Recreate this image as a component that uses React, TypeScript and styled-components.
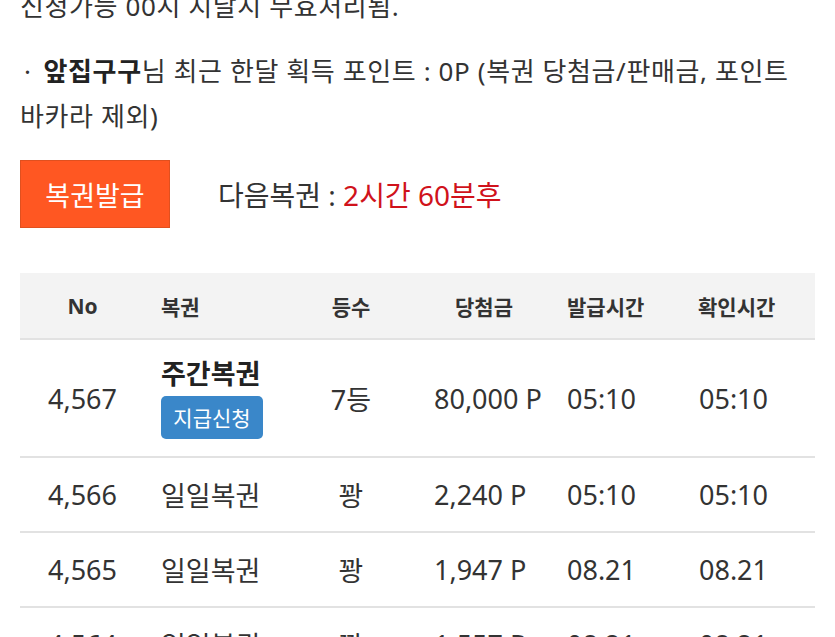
import React from "react";
import styled, { createGlobalStyle } from "styled-components";

const GlobalStyle = createGlobalStyle`
  html, body {
    margin: 0;
    padding: 0;
    background: #ffffff;
  }
  body {
    font-family: "Noto Sans", "Noto Sans CJK KR", sans-serif;
    color: #333333;
    overflow: hidden;
    word-break: keep-all;
  }
`;

const Page = styled.div`
  padding: 0 20px;
  width: 795px;
`;

const Notice = styled.p<{ $first?: boolean }>`
  margin: ${(p) => (p.$first ? "-16px 0 20px" : "0")};
  font-family: "Noto Sans", "Noto Sans CJK KR", sans-serif;
  font-size: 26px;
  line-height: 45px;
  letter-spacing: 0.6px;
  color: #333333;
  word-break: keep-all;
`;

const Dot = styled.span`
  margin: 0 12px 0 4px;
`;

const Name = styled.strong`
  font-weight: 700;
  color: #222222;
`;

const ActionRow = styled.div`
  display: flex;
  align-items: center;
  gap: 48px;
  margin-top: 21px;
`;

const IssueButton = styled.button`
  width: 150px;
  height: 68px;
  background: #ff5722;
  border: 1px solid #e0501f;
  color: #ffffff;
  font-family: "Noto Sans CJK KR", sans-serif;
  font-size: 27px;
  padding: 0;
  cursor: pointer;
`;

const NextText = styled.div`
  font-family: "Noto Sans", "Noto Sans CJK KR", sans-serif;
  font-size: 28px;
  color: #333333;
`;

const Red = styled.span`
  color: #d0121b;
`;

const Table = styled.div`
  margin-top: 45px;
  display: grid;
  grid-template-columns: 125px 145px 122px 144px 124px 135px;
`;

const HeadCell = styled.div<{ $align: "center" | "left"; $pad: number }>`
  height: 65px;
  background: #f3f3f3;
  border-bottom: 2px solid #e2e2e2;
  display: flex;
  align-items: center;
  justify-content: ${(p) => (p.$align === "center" ? "center" : "flex-start")};
  padding-left: ${(p) => p.$pad}px;
  font-family: "Noto Sans", "Noto Sans CJK KR", sans-serif;
  font-size: 21px;
  font-weight: 700;
  color: #333333;
`;

const Cell = styled.div<{ $align: "center" | "left"; $pad: number; $tall?: boolean }>`
  height: ${(p) => (p.$tall ? 116 : 73)}px;
  border-bottom: 2px solid #e2e2e2;
  display: flex;
  flex-direction: column;
  justify-content: center;
  align-items: ${(p) => (p.$align === "center" ? "center" : "flex-start")};
  padding-left: ${(p) => p.$pad}px;
  font-family: "Noto Sans", "Noto Sans CJK KR", sans-serif;
  font-size: 27px;
  color: #333333;
  white-space: nowrap;
`;

const TicketName = styled.div`
  font-family: "Noto Sans CJK KR", sans-serif;
  font-size: 27px;
  font-weight: 700;
  color: #222222;
  line-height: 34px;
  margin-top: -2px;
`;

const Badge = styled.span`
  flex-shrink: 0;
  margin-top: 6px;
  width: 102px;
  height: 43px;
  border-radius: 5px;
  background: #3a87c9;
  color: #ffffff;
  font-family: "Noto Sans CJK KR", sans-serif;
  font-size: 21px;
  display: flex;
  align-items: center;
  justify-content: center;
`;

type Col = { label: string; align: "center" | "left"; headPad: number; dataPad: number };

const cols: Col[] = [
  { label: "No", align: "center", headPad: 0, dataPad: 0 },
  { label: "복권", align: "left", headPad: 16, dataPad: 16 },
  { label: "등수", align: "center", headPad: 0, dataPad: 0 },
  { label: "당첨금", align: "left", headPad: 43, dataPad: 22 },
  { label: "발급시간", align: "left", headPad: 11, dataPad: 11 },
  { label: "확인시간", align: "left", headPad: 18, dataPad: 19 },
];

type Row = {
  no: string;
  ticket: string;
  rank: string;
  prize: string;
  issued: string;
  checked: string;
  claim?: boolean;
};

const rows: Row[] = [
  { no: "4,567", ticket: "주간복권", rank: "7등", prize: "80,000 P", issued: "05:10", checked: "05:10", claim: true },
  { no: "4,566", ticket: "일일복권", rank: "꽝", prize: "2,240 P", issued: "05:10", checked: "05:10" },
  { no: "4,565", ticket: "일일복권", rank: "꽝", prize: "1,947 P", issued: "08.21", checked: "08.21" },
  { no: "4,564", ticket: "일일복권", rank: "꽝", prize: "1,557 P", issued: "08.21", checked: "08.21" },
];

export default function App() {
  return (
    <>
      <GlobalStyle />
      <Page>
        <Notice $first>신청가능 00시 지날시 무효처리됨.</Notice>
        <Notice>
          <Dot>·</Dot>
          <Name>앞집구구</Name>님 최근 한달 획득 포인트 : 0P (복권 당첨금/판매금, 포인트 바카라 제외)
        </Notice>
        <ActionRow>
          <IssueButton>복권발급</IssueButton>
          <NextText>
            다음복권 : <Red>2시간 60분후</Red>
          </NextText>
        </ActionRow>
        <Table>
          {cols.map((c) => (
            <HeadCell key={c.label} $align={c.align} $pad={c.headPad}>
              {c.label}
            </HeadCell>
          ))}
          {rows.map((r) => {
            const tall = !!r.claim;
            return (
              <React.Fragment key={r.no}>
                <Cell $align={cols[0].align} $pad={cols[0].dataPad} $tall={tall}>{r.no}</Cell>
                <Cell $align={cols[1].align} $pad={cols[1].dataPad} $tall={tall}>
                  {r.claim ? (
                    <>
                      <TicketName>{r.ticket}</TicketName>
                      <Badge>지급신청</Badge>
                    </>
                  ) : (
                    r.ticket
                  )}
                </Cell>
                <Cell $align={cols[2].align} $pad={cols[2].dataPad} $tall={tall}>{r.rank}</Cell>
                <Cell $align={cols[3].align} $pad={cols[3].dataPad} $tall={tall}>{r.prize}</Cell>
                <Cell $align={cols[4].align} $pad={cols[4].dataPad} $tall={tall}>{r.issued}</Cell>
                <Cell $align={cols[5].align} $pad={cols[5].dataPad} $tall={tall}>{r.checked}</Cell>
              </React.Fragment>
            );
          })}
        </Table>
      </Page>
    </>
  );
}
